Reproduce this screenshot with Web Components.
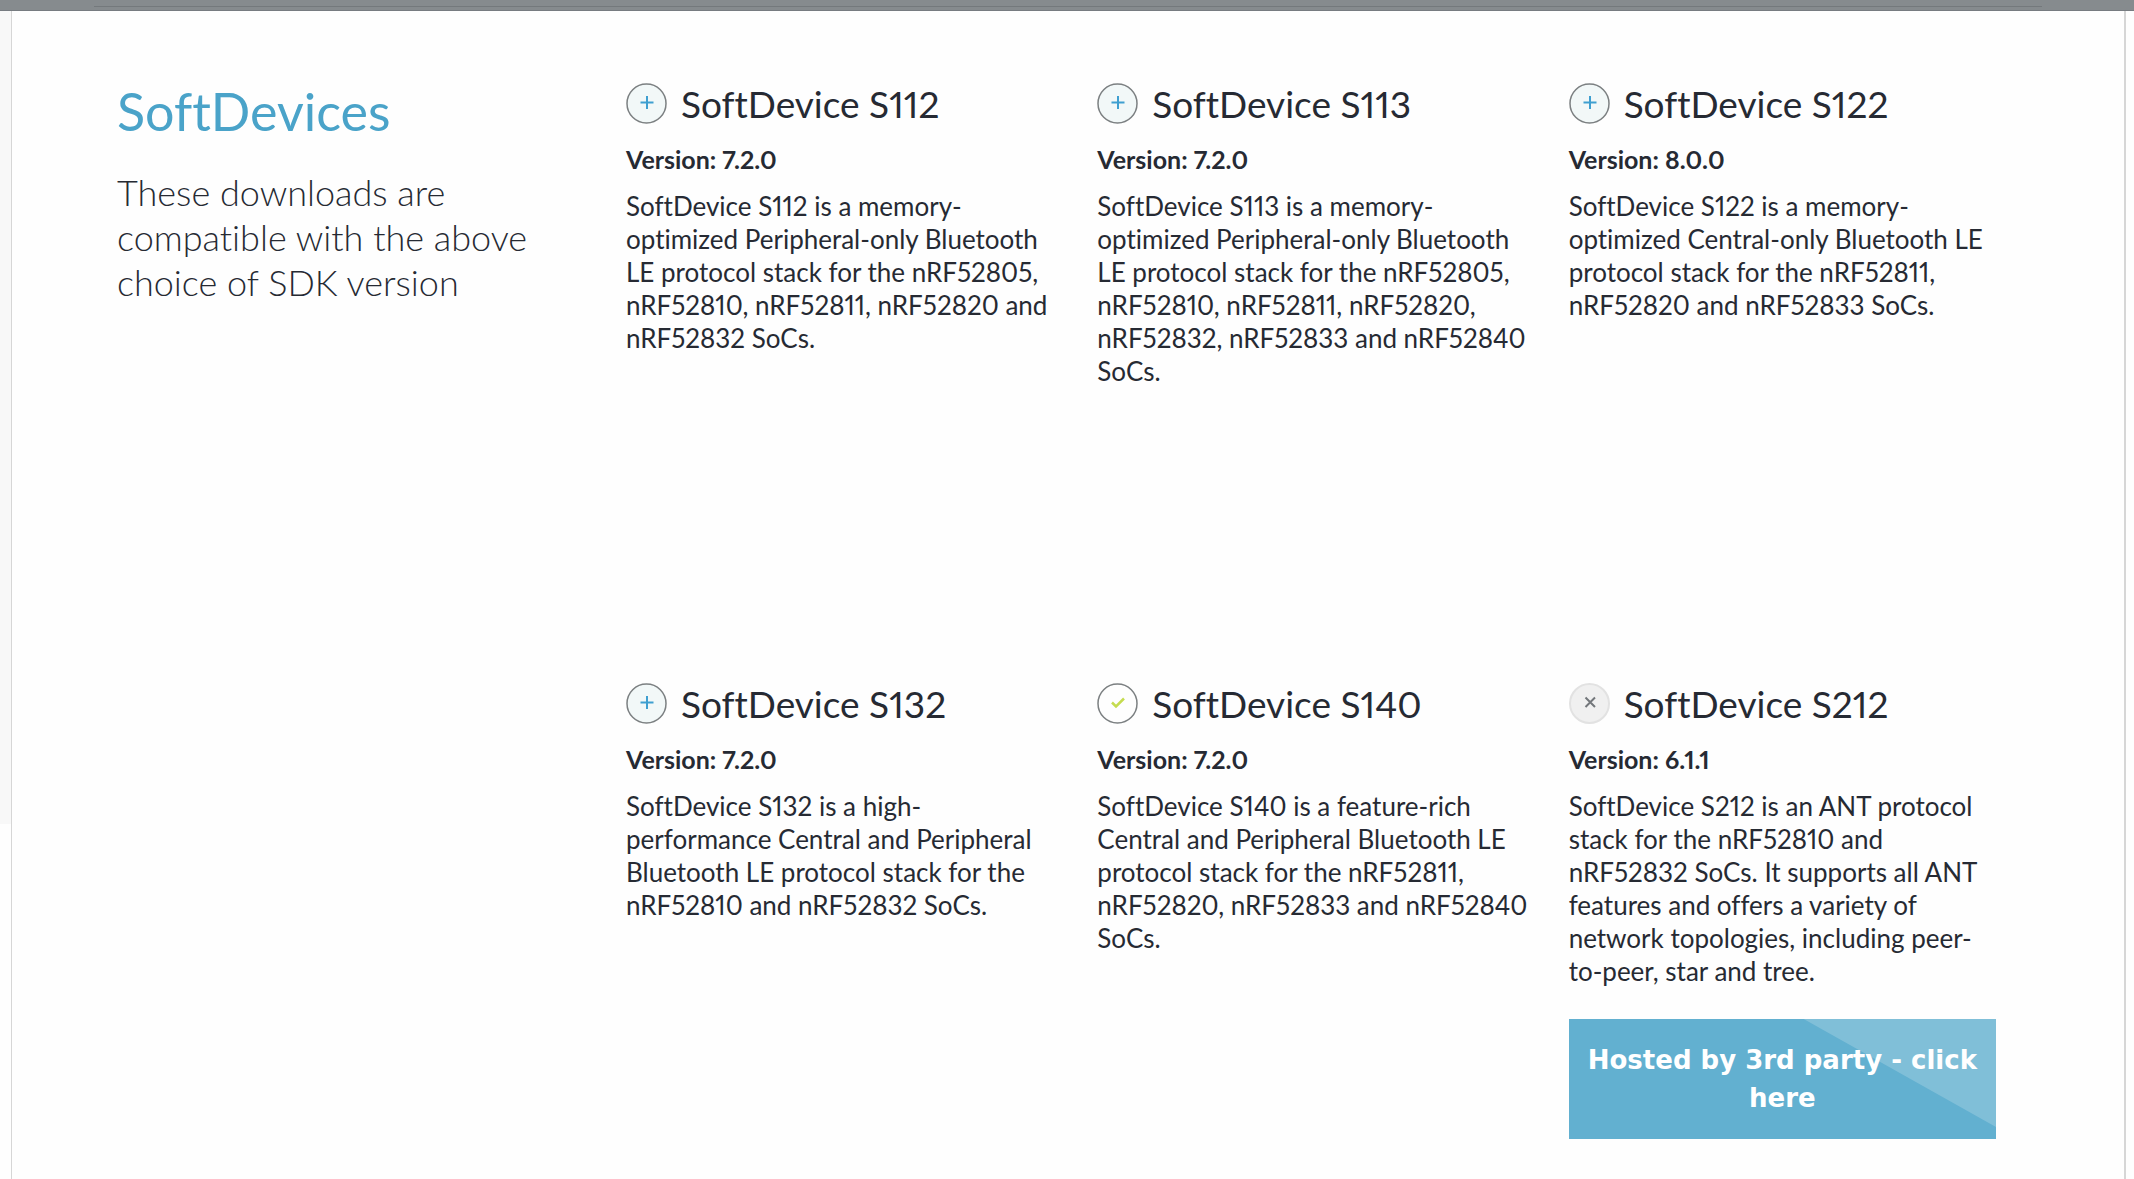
<!DOCTYPE html>
<html lang="en">
<head>
<meta charset="utf-8">
<title>SoftDevices</title>
<style>
  html { background: #fefefe; }
  body { margin: 0; font-family: Lato, "Open Sans", sans-serif; color: #262a33; font-variant-ligatures: none; font-variant-numeric: proportional-nums; }
</style>
</head>
<body>
<sd-page>
  <sd-section>
    <span slot="title">SoftDevices</span>
    <span slot="intro">These downloads are<br>compatible with the above<br>choice of SDK version</span>
    <sd-card state="add" name="SoftDevice S112" version="7.2.0">SoftDevice S112 is a memory-<br>optimized Peripheral-only Bluetooth<br>LE protocol stack for the nRF52805,<br>nRF52810, nRF52811, nRF52820 and<br>nRF52832 SoCs.</sd-card>
    <sd-card state="add" name="SoftDevice S113" version="7.2.0">SoftDevice S113 is a memory-<br>optimized Peripheral-only Bluetooth<br>LE protocol stack for the nRF52805,<br>nRF52810, nRF52811, nRF52820,<br>nRF52832, nRF52833 and nRF52840<br>SoCs.</sd-card>
    <sd-card state="add" name="SoftDevice S122" version="8.0.0">SoftDevice S122 is a memory-<br>optimized Central-only Bluetooth LE<br>protocol stack for the nRF52811,<br>nRF52820 and nRF52833 SoCs.</sd-card>
    <sd-card state="add" name="SoftDevice S132" version="7.2.0">SoftDevice S132 is a high-<br>performance Central and Peripheral<br>Bluetooth LE protocol stack for the<br>nRF52810 and nRF52832 SoCs.</sd-card>
    <sd-card state="selected" name="SoftDevice S140" version="7.2.0">SoftDevice S140 is a feature-rich<br>Central and Peripheral Bluetooth LE<br>protocol stack for the nRF52811,<br>nRF52820, nRF52833 and nRF52840<br>SoCs.</sd-card>
    <sd-card state="blocked" name="SoftDevice S212" version="6.1.1">SoftDevice S212 is an ANT protocol<br>stack for the nRF52810 and<br>nRF52832 SoCs. It supports all ANT<br>features and offers a variety of<br>network topologies, including peer-<br>to-peer, star and tree.<sd-link slot="action">Hosted by 3rd party - click<br>here</sd-link></sd-card>
  </sd-section>
</sd-page>
<script>
const define = (name, html, setup, observed = []) => {
  const template = document.createElement('template');
  template.innerHTML = html;
  customElements.define(name, class extends HTMLElement {
    static observedAttributes = observed;
    constructor() {
      super();
      this.attachShadow({ mode: 'open' }).append(template.content.cloneNode(true));
    }
    connectedCallback() { if (setup) setup(this, this.shadowRoot); }
    attributeChangedCallback() { if (setup) setup(this, this.shadowRoot); }
  });
};

define('sd-page', `
  <style>
    :host { display: flex; flex-direction: column; min-height: 100vh; }
    .bar { height: 11px; box-sizing: border-box; background: #868b8e; border-bottom: 1px solid #777c81; padding: 6px 92px 0 94px; }
    .bar::before { content: ""; display: block; height: 1px; background: #74797c; }
    .body { flex: 1; display: flex; }
    .gutter { flex: 0 0 11px; }
    .left { background: linear-gradient(#f8f8f8, #f8f8f8) no-repeat 0 0 / 100% 813px; }
    .right { flex-basis: 8px; }
    main { flex: 1; border: solid #d6d6d6; border-width: 0 2px 0 1px; }
  </style>
  <div class="bar"></div>
  <div class="body">
    <div class="gutter left"></div>
    <main><slot></slot></main>
    <div class="gutter right"></div>
  </div>`);

define('sd-section', `
  <style>
    :host { display: flex; gap: 44px; padding: 72px 128px 40px 105px; }
    .intro { flex: 465 1 0; min-width: 0; }
    .cards { flex: 1370 1 0; display: grid; grid-template-columns: repeat(3, minmax(0, 1fr)); column-gap: 44px; grid-auto-rows: minmax(456px, auto); row-gap: 144px; }
    h1 { margin: 0 0 31px; font-size: 52px; line-height: 56px; font-weight: 400; color: #4aa3c9; }
    p { margin: 0; font-size: 36px; line-height: 45px; font-weight: 300; }
  </style>
  <div class="intro">
    <h1><slot name="title"></slot></h1>
    <p><slot name="intro"></slot></p>
  </div>
  <div class="cards"><slot></slot></div>`);

const icons = {
  add: '<path d="M14.500 19.500h13M21 13v13" stroke="#3f9fd0"/>',
  selected: '<path d="M15 19.500l4 4L27 15.500" stroke="#c5dc50" stroke-width="2.500"/>',
  blocked: '<path d="M16.500 14.500l9.500 9.500M26 14.500l-9.500 9.500" stroke="#73777b"/>'
};
const labels = { add: 'Add', selected: 'Remove', blocked: 'Unavailable' };

define('sd-toggle', `
  <style>
    :host { display: block; flex: none; }
    button { display: block; width: 41px; height: 41px; padding: 0; border: 0; background: none; }
    svg { display: block; width: 41px; height: 41px; fill: none; stroke-width: 2; }
    circle { stroke: #7c8082; stroke-width: 1.500; fill: #f2f8f8; }
    :host([state="selected"]) circle { fill: #fefefe; }
    :host([state="blocked"]) circle { fill: #f0f0f0; stroke: #e2e2e2; stroke-width: 2; }
  </style>
  <button type="button"><svg viewBox="0 0 41 41" aria-hidden="true"><circle cx="20.500" cy="20.500" r="19.500"/><g></g></svg></button>`,
  (host, root) => {
    const state = host.getAttribute('state') || 'add';
    const button = root.querySelector('button');
    root.querySelector('g').innerHTML = icons[state];
    button.disabled = state === 'blocked';
    button.setAttribute('aria-label', labels[state]);
  }, ['state']);

define('sd-card', `
  <style>
    :host { display: block; white-space: nowrap; }
    header { display: flex; align-items: center; gap: 14px; height: 41px; }
    h2 { margin: 0; font-size: 37px; line-height: 40px; font-weight: 400; }
    .version { margin: 19px 0 15px; font-size: 25px; line-height: 32px; font-weight: 700; }
    .text { margin: 0; font-size: 26px; line-height: 33px; }
    ::slotted(sd-link) { margin-top: 31px; }
  </style>
  <header><sd-toggle></sd-toggle><h2></h2></header>
  <p class="version"></p>
  <p class="text"><slot></slot></p>
  <slot name="action"></slot>`,
  (host, root) => {
    root.querySelector('sd-toggle').setAttribute('state', host.getAttribute('state'));
    root.querySelector('h2').textContent = host.getAttribute('name');
    root.querySelector('.version').textContent = 'Version: ' + host.getAttribute('version');
  });

define('sd-link', `
  <style>
    :host { display: block; }
    a { display: block; position: relative; z-index: 0; padding: 22px 8px; text-align: center; text-decoration: none; color: #fff; background: #62b0d0;
        font-family: "DejaVu Sans", sans-serif; font-size: 26px; line-height: 38px; font-weight: 700; }
    a::before { content: ""; position: absolute; z-index: -1; inset: 0; background: #80bfd8; clip-path: polygon(55% 0, 100% 0, 100% 90%); }
  </style>
  <a href="#"><slot></slot></a>`);
</script>
</body>
</html>
